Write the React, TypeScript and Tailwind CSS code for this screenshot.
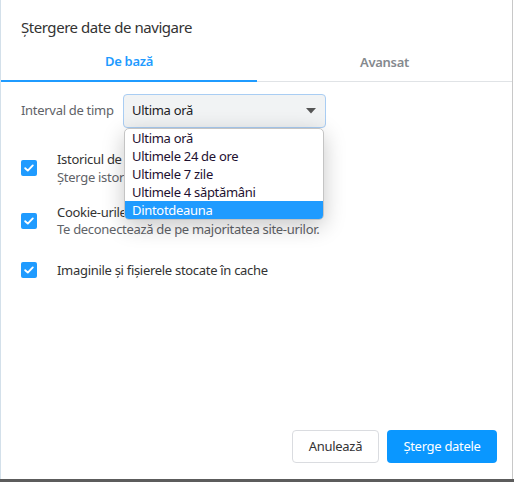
import React from "react";

const F = { fontFamily: '"Segoe UI", "Noto Sans", "Open Sans", sans-serif' };

function Check() {
  return (
    <div className="w-4 h-4 rounded-[2px] bg-[#1f9bff] flex items-center justify-center shrink-0">
      <svg width="12" height="12" viewBox="0 0 12 12">
        <polyline points="2.2,6.2 4.8,8.6 9.8,3.4" fill="none" stroke="#fff" strokeWidth="1.9" strokeLinecap="round" strokeLinejoin="round" />
      </svg>
    </div>
  );
}

export default function App() {
  const items = ["Ultima oră", "Ultimele 24 de ore", "Ultimele 7 zile", "Ultimele 4 săptămâni", "Dintotdeauna"];
  return (
    <div className="w-[514px] h-[482px] bg-white flex flex-col text-[#202124] tracking-[-0.3px]" style={F}>
      <div className="flex-1 flex min-h-0">
        <div className="flex-1 flex flex-col border-l border-[#d3e0ea] border-r border-r-[#c8c8c8] mr-[1px] bg-white relative">
          <div className="pt-[16px] pl-[20px] text-[15px] leading-[22px] text-[#333] tracking-[-0.45px]">Ștergere date de navigare</div>
          <div className="flex mt-[7px] border-b border-[#e0e3e6]">
            <div className="w-[256px] h-[37px] flex items-center justify-center text-[13px] font-semibold text-[#1f9bff] border-b-2 border-[#1f9bff] -mb-[1px] pb-[1px]">De bază</div>
            <div className="flex-1 h-[36px] flex items-center justify-center text-[13px] font-semibold text-[#85898e]">Avansat</div>
          </div>
          <div className="pl-[20px] pt-[12px] flex items-center">
            <div className="text-[13px] text-[#5f6368] w-[102px]">Interval de timp</div>
            <div className="relative">
              <div className="w-[203px] h-[34px] rounded-[4px] border border-[#a9cdf3] bg-[#f1f3f4] flex items-center pl-[8px] pr-[8px] text-[13px] text-[#202124]">
                <span className="flex-1">Ultima oră</span>
                <svg width="10" height="6" viewBox="0 0 10 6" className="mr-[1px]"><polygon points="0,0 10,0 5,5.5" fill="#555" /></svg>
              </div>
              <div className="absolute left-[1px] top-[34px] w-[200px] bg-white border border-[#c4c4c4] rounded-[5px] shadow-[0_6px_22px_rgba(0,0,0,0.22)] overflow-hidden z-10 text-[13px] leading-[18px]">
                {items.map((t, i) => (
                  <div key={t} className={"pl-[7px] h-[18px] " + (i === 4 ? "bg-[#1f9bff] text-white" : "text-[#1e1030]")}>{t}</div>
                ))}
              </div>
            </div>
          </div>
          <div className="pl-[20px] mt-[22px] flex items-center gap-[20px]">
            <Check />
            <div className="text-[13px] leading-[18px]">
              <div className="text-[#333]">Istoricul de navigare</div>
              <div className="text-[#5f6368]">Șterge istoricul de pe toate dispozitivele</div>
            </div>
          </div>
          <div className="pl-[20px] mt-[18px] flex items-center gap-[20px]">
            <Check />
            <div className="text-[13px] leading-[17px]">
              <div className="text-[#333]">Cookie-urile și alte date ale site-urilor</div>
              <div className="text-[#5f6368]">Te deconectează de pe majoritatea site-urilor.</div>
            </div>
          </div>
          <div className="pl-[20px] mt-[23px] flex items-center gap-[20px]">
            <Check />
            <div className="text-[13px] leading-[18px] text-[#333]">Imaginile și fișierele stocate în cache</div>
          </div>
          <div className="flex-1" />
          <div className="flex justify-end gap-[8px] pr-[15px] pb-[16px]">
            <button className="w-[87px] h-[33px] rounded-[4px] border border-[#dadce0] bg-white text-[13px] text-[#333]">Anulează</button>
            <button className="w-[110px] h-[33px] rounded-[4px] bg-[#0a97ff] text-[13px] text-white">Șterge datele</button>
          </div>
        </div>
      </div>
      <div className="h-[3px] bg-[#5c5c5c]" />
    </div>
  );
}
